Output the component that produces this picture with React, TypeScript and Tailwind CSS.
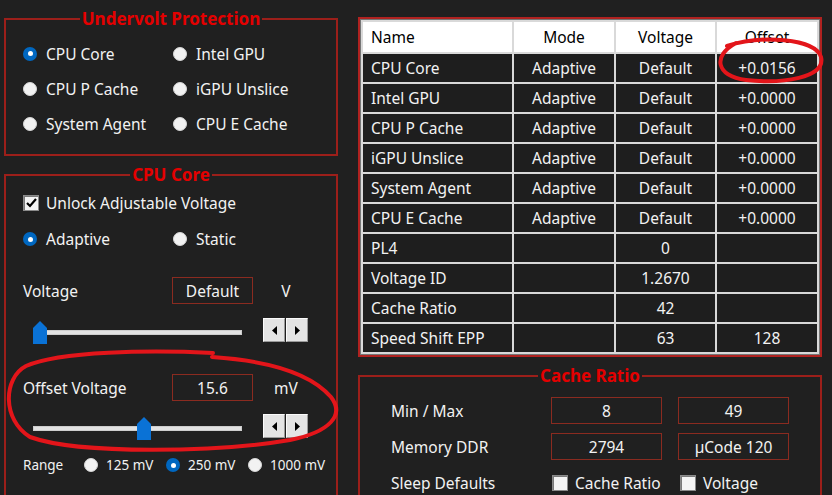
import type { ReactNode } from "react";

const rows = [
  ["CPU Core", "Adaptive", "Default", "+0.0156"],
  ["Intel GPU", "Adaptive", "Default", "+0.0000"],
  ["CPU P Cache", "Adaptive", "Default", "+0.0000"],
  ["iGPU Unslice", "Adaptive", "Default", "+0.0000"],
  ["System Agent", "Adaptive", "Default", "+0.0000"],
  ["CPU E Cache", "Adaptive", "Default", "+0.0000"],
  ["PL4", "", "0", ""],
  ["Voltage ID", "", "1.2670", ""],
  ["Cache Ratio", "", "42", ""],
  ["Speed Shift EPP", "", "63", "128"],
];

function Radio({ checked }: { checked?: boolean }) {
  if (checked) {
    return (
      <span className="flex h-[14px] w-[14px] shrink-0 items-center justify-center rounded-full bg-[#0067c0]">
        <span className="h-[5px] w-[5px] rounded-full bg-white" />
      </span>
    );
  }
  return <span className="h-[14px] w-[14px] shrink-0 rounded-full border border-[#d6d6d6] bg-[#f2f2f2]" />;
}

function Checkbox({ checked }: { checked?: boolean }) {
  return (
    <span className="flex h-[16px] w-[16px] shrink-0 items-center justify-center border border-[#8a8a8a] bg-[#f4f4f4] shadow-[inset_1px_1px_0_#7a7a7a]">
      {checked && (
        <svg width="11" height="10" viewBox="0 0 11 10">
          <path d="M1 5 L4 8 L10 1" fill="none" stroke="#000" strokeWidth="2.2" />
        </svg>
      )}
    </span>
  );
}

function Option({ checked, children }: { checked?: boolean; children: ReactNode }) {
  return (
    <div className="flex items-center gap-[9px]">
      <Radio checked={checked} />
      <span>{children}</span>
    </div>
  );
}

// group box with the title sitting on the top border
function Group({ title, className, children }: { title: string; className?: string; children: ReactNode }) {
  return (
    <fieldset className={`border-2 border-[#9c1f1a] ${className ?? ""}`}>
      <legend className="mx-auto px-[2px] text-[17px] leading-[20px] font-bold text-[#e40000]">{title}</legend>
      {children}
    </fieldset>
  );
}

function ValueBox({ children, className }: { children: ReactNode; className?: string }) {
  return (
    <div className={`flex h-[27px] items-center justify-center border border-[#8b2b20] ${className ?? ""}`}>
      {children}
    </div>
  );
}

function Arrow({ dir }: { dir: "left" | "right" }) {
  return (
    <div className="flex h-[24px] w-[22px] items-center justify-center border border-t-[#fbfbfb] border-l-[#fbfbfb] border-r-[#9a9a9a] border-b-[#9a9a9a] bg-[#e4e4e4]">
      <svg width="5" height="9" viewBox="0 0 5 9">
        {dir === "left" ? <path d="M5 0 L0 4.5 L5 9 Z" fill="#000" /> : <path d="M0 0 L5 4.5 L0 9 Z" fill="#000" />}
      </svg>
    </div>
  );
}

function Slider({ thumb }: { thumb: number }) {
  return (
    <div className="flex items-start">
      <div className="relative mt-[3px] ml-[10px] h-[23px] w-[209px]">
        <div className="absolute top-[9px] right-0 left-0 h-[5px] bg-[#e2e2e2] shadow-[inset_0_0_0_1px_#cdcdcd]" />
        <svg className="absolute top-0" style={{ left: thumb }} width="14" height="23" viewBox="0 0 14 23">
          <path d="M0 7 L7 0 L14 7 L14 23 L0 23 Z" fill="#0a72d6" />
        </svg>
      </div>
      <div className="ml-[21px] flex gap-px">
        <Arrow dir="left" />
        <Arrow dir="right" />
      </div>
    </div>
  );
}

function Cell({ children, align = "center", header }: { children: ReactNode; align?: "left" | "center"; header?: boolean }) {
  return (
    <div
      className={`flex items-center ${align === "left" ? "pl-[8px]" : "justify-center"} ${
        header ? "h-[30px] bg-white text-black" : "h-[28px] bg-[#1e1e1e]"
      }`}
    >
      {children}
    </div>
  );
}

export default function App() {
  return (
    <div className="relative flex h-[495px] w-[832px] items-start overflow-hidden bg-[#202020] font-['Noto_Sans',sans-serif] text-[15.5px] leading-[20px] text-[#f2f2f2]">
      {/* left column */}
      <div className="ml-[4px] w-[334px]">
        <Group title="Undervolt Protection" className="mt-[9px]">
          <div className="grid grid-cols-[150px_1fr] auto-rows-[35px] items-center pt-[7px] pb-[13px] pl-[17px]">
            <Option checked>CPU Core</Option>
            <Option>Intel GPU</Option>
            <Option>CPU P Cache</Option>
            <Option>iGPU Unslice</Option>
            <Option>System Agent</Option>
            <Option>CPU E Cache</Option>
          </div>
        </Group>

        <Group title="CPU Core" className="mt-[9px]">
          <div className="pt-[8px] pb-[40px] pl-[17px]">
            <div className="flex h-[20px] items-center gap-[7px]">
              <Checkbox checked />
              <span>Unlock Adjustable Voltage</span>
            </div>
            <div className="mt-[16px] grid h-[20px] grid-cols-[150px_1fr] items-center">
              <Option checked>Adaptive</Option>
              <Option>Static</Option>
            </div>

            <div className="mt-[28px] flex h-[27px] items-center">
              <span className="w-[149px]">Voltage</span>
              <ValueBox className="w-[81px]">Default</ValueBox>
              <span className="ml-[10px] w-[46px] text-center">V</span>
            </div>
            <div className="mt-[14px]">
              <Slider thumb={0} />
            </div>

            <div className="mt-[30px] flex h-[27px] items-center">
              <span className="w-[149px]">Offset Voltage</span>
              <ValueBox className="w-[81px]">15.6</ValueBox>
              <span className="ml-[10px] w-[46px] text-center">mV</span>
            </div>
            <div className="mt-[13px]">
              <Slider thumb={104} />
            </div>

            <div className="mt-[16px] flex h-[18px] items-center text-[13.5px]">
              <span className="w-[61px]">Range</span>
              <div className="flex w-[82px] items-center gap-[8px]">
                <Radio />
                <span>125 mV</span>
              </div>
              <div className="flex w-[82px] items-center gap-[8px]">
                <Radio checked />
                <span>250 mV</span>
              </div>
              <div className="flex items-center gap-[8px]">
                <Radio />
                <span>1000 mV</span>
              </div>
            </div>
          </div>
        </Group>
      </div>

      {/* right column */}
      <div className="ml-[20px] w-[464px]">
        <div className="mt-[17px] border-2 border-[#b02220]">
          <div className="border border-[#767676]">
            <div className="grid grid-cols-[149px_100px_99px_100px] gap-[2px] bg-[#d9d9d9] p-[2px]">
              <Cell header align="left">Name</Cell>
              <Cell header>Mode</Cell>
              <Cell header>Voltage</Cell>
              <Cell header>Offset</Cell>
              {rows.map((r) => (
                <div key={r[0]} className="contents">
                  <Cell align="left">{r[0]}</Cell>
                  <Cell>{r[1]}</Cell>
                  <Cell>{r[2]}</Cell>
                  <Cell>{r[3]}</Cell>
                </div>
              ))}
            </div>
          </div>
        </div>

        <Group title="Cache Ratio" className="mt-[9px]">
          <div className="pt-[11px] pb-[20px] pl-[31px]">
            <div className="flex h-[27px] items-center">
              <span className="w-[160px]">Min / Max</span>
              <ValueBox className="w-[111px]">8</ValueBox>
              <ValueBox className="ml-[16px] w-[111px]">49</ValueBox>
            </div>
            <div className="mt-[9px] flex h-[27px] items-center">
              <span className="w-[160px]">Memory DDR</span>
              <ValueBox className="w-[111px]">2794</ValueBox>
              <ValueBox className="ml-[16px] w-[111px]">µCode 120</ValueBox>
            </div>
            <div className="mt-[13px] flex h-[20px] items-center">
              <span className="w-[161px]">Sleep Defaults</span>
              <div className="flex w-[128px] items-center gap-[7px]">
                <Checkbox />
                <span>Cache Ratio</span>
              </div>
              <div className="flex items-center gap-[7px]">
                <Checkbox />
                <span>Voltage</span>
              </div>
            </div>
          </div>
        </Group>
      </div>

      {/* hand-drawn annotations */}
      <svg className="pointer-events-none absolute inset-0" width="832" height="495" viewBox="0 0 832 495">
        <path
          d="M213 353 C150 350 60 351 26 366 C3 378 2 420 30 437 C80 455 220 452 290 440 C330 432 345 415 331 397 C312 375 272 361 212 357"
          fill="none"
          stroke="#e3151a"
          strokeWidth="4"
          strokeLinecap="round"
        />
        <path
          d="M727 46 C760 35 815 38 821 57 C826 78 782 84 746 80 C716 76 712 56 736 43"
          fill="none"
          stroke="#e3151a"
          strokeWidth="4"
          strokeLinecap="round"
        />
      </svg>
    </div>
  );
}
